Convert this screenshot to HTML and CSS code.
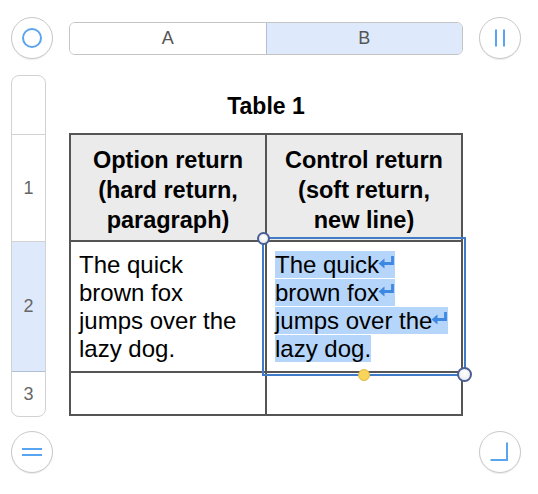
FILE: index.html
```html
<!DOCTYPE html>
<html>
<head>
<meta charset="utf-8">
<link rel="stylesheet" href="styles.css">
</head>
<body>
<div class="page">
  <button class="circle">
    <svg width="22" height="22" viewBox="0 0 22 22"><circle cx="11" cy="11" r="9" fill="none" stroke="#5aa5f0" stroke-width="2"/></svg>
  </button>
  <div class="colbar">
    <div class="colseg">A</div>
    <div class="colseg sel">B</div>
  </div>
  <button class="circle">
    <svg width="22" height="22" viewBox="0 0 22 22"><path d="M7 2.5V19.5M15 2.5V19.5" stroke="#5aa5f0" stroke-width="2"/></svg>
  </button>

  <div class="rowbar">
    <div class="rowseg top"></div>
    <div class="rowseg r1">1</div>
    <div class="rowseg r2 sel">2</div>
    <div class="rowseg r3">3</div>
  </div>
  <div class="tablearea">
    <div class="title">Table 1</div>
    <div class="tablewrap">
      <div class="grid">
        <div class="cell head">Option return<br>(hard return,<br>paragraph)</div>
        <div class="cell head">Control return<br>(soft return,<br>new line)</div>
        <div class="cell body">The quick<br>brown fox<br>jumps over the<br>lazy dog.</div>
        <div class="cell body"><span class="hl">The quick<svg class="ret" width="17" height="14" viewBox="0 0 17 14"><path d="M14.5 1V8.5H4.5" fill="none" stroke="#3f88e2" stroke-width="2.8"/><path d="M0.5 8.5L6.5 3.5V13.5Z" fill="#3f88e2"/></svg></span><br><span class="hl">brown fox<svg class="ret" width="17" height="14" viewBox="0 0 17 14"><path d="M14.5 1V8.5H4.5" fill="none" stroke="#3f88e2" stroke-width="2.8"/><path d="M0.5 8.5L6.5 3.5V13.5Z" fill="#3f88e2"/></svg></span><br><span class="hl">jumps over the<svg class="ret" width="17" height="14" viewBox="0 0 17 14"><path d="M14.5 1V8.5H4.5" fill="none" stroke="#3f88e2" stroke-width="2.8"/><path d="M0.5 8.5L6.5 3.5V13.5Z" fill="#3f88e2"/></svg></span><br><span class="hl">lazy dog.</span></div>
        <div class="cell body"></div>
        <div class="cell body"></div>
      </div>
      <div class="selection">
        <span class="handle tl"></span>
        <span class="handle br"></span>
        <span class="dot"></span>
      </div>
    </div>
  </div>
  <div></div>

  <button class="circle low">
    <svg width="22" height="22" viewBox="0 0 22 22"><path d="M1 8H21M1 14H21" stroke="#5aa5f0" stroke-width="2"/></svg>
  </button>
  <div></div>
  <button class="circle low">
    <svg width="22" height="22" viewBox="0 0 22 22"><path d="M18 1.5V19H1.5" fill="none" stroke="#5aa5f0" stroke-width="2"/></svg>
  </button>
</div>
</body>
</html>
```

FILE: styles.css
```css
html, body {
  margin: 0;
  padding: 0;
  background: #ffffff;
}
body {
  font-family: "Liberation Sans", Arial, sans-serif;
  color: #000;
}
.page {
  display: grid;
  grid-template-columns: 42px 394px 42px;
  grid-template-rows: 42px auto 42px;
  column-gap: 16px;
  row-gap: 16px;
  padding: 17px 0 0 11px;
  align-items: start;
}
.circle {
  width: 42px;
  height: 42px;
  border-radius: 50%;
  border: 1px solid #c9c9c9;
  background: #fff;
  box-shadow: 0 1px 1px rgba(0,0,0,0.08);
  padding: 0;
  display: flex;
  align-items: center;
  justify-content: center;
}
.circle.low { margin-top: -2px; }
.circle svg { display: block; }
.colbar {
  display: flex;
  height: 33px;
  margin-top: 5px;
  border: 1px solid #c4c4c4;
  border-radius: 6px;
  overflow: hidden;
  box-sizing: border-box;
}
.colseg {
  flex: 1;
  display: flex;
  align-items: center;
  justify-content: center;
  font-size: 18px;
  color: #555;
  background: #fff;
}
.colseg.sel {
  background: #deeafb;
  border-left: 1px solid #aebfd6;
}
.rowbar {
  width: 35px;
  height: 342px;
  border: 1px solid #d2d2d2;
  border-radius: 8px;
  box-sizing: border-box;
  overflow: hidden;
  display: flex;
  flex-direction: column;
}
.rowseg {
  display: flex;
  align-items: center;
  justify-content: center;
  font-size: 18px;
  color: #666;
  border-bottom: 1px solid #d2d2d2;
  flex-shrink: 0;
}
.rowseg.top { height: 58px; }
.rowseg.r1 { height: 106px; }
.rowseg.r2 { height: 129px; }
.rowseg.r3 { flex: 1; border-bottom: none; }
.rowseg.sel {
  background: #deeafb;
  border-bottom-color: #aebfd6;
}
.tablearea {
  display: flex;
  flex-direction: column;
}
.title {
  height: 58px;
  flex-shrink: 0;
  display: flex;
  align-items: center;
  justify-content: center;
  font-weight: bold;
  font-size: 23px;
  padding-top: 4px;
  box-sizing: border-box;
}
.tablewrap {
  position: relative;
  width: 394px;
}
.grid {
  display: grid;
  grid-template-columns: 194px 194px;
  grid-template-rows: 105px 129px 41px;
  gap: 2px;
  padding: 2px;
  background: #555;
}
.cell {
  background: #fff;
}
.cell.head {
  background: #ebebeb;
  font-weight: bold;
  font-size: 23.5px;
  line-height: 30px;
  text-align: center;
  padding-top: 10px;
}
.cell.body {
  font-size: 24px;
  line-height: 28px;
  padding: 9px 0 0 8px;
}
.hl {
  background: #b6d5fb;
}
.ret {
  display: inline-block;
  vertical-align: 4px;
  margin-left: -1px;
}
.selection {
  position: absolute;
  left: 193px;
  top: 104px;
  width: 204px;
  height: 139px;
  border: 2px solid #3f7bc6;
  box-sizing: border-box;
}
.handle {
  position: absolute;
  width: 13px;
  height: 13px;
  border-radius: 50%;
  background: radial-gradient(circle at 50% 40%, #ffffff, #e6e6ea);
  border: 2px solid #4a5f94;
  box-sizing: border-box;
}
.handle.tl { left: -7px; top: -7px; }
.handle.br { right: -8px; bottom: -8px; width: 15px; height: 15px; }
.dot {
  position: absolute;
  left: 94px;
  bottom: -7px;
  width: 12px;
  height: 12px;
  border-radius: 50%;
  background: #f8d558;
  border: 1px solid #e2b845;
  box-sizing: border-box;
}
```
